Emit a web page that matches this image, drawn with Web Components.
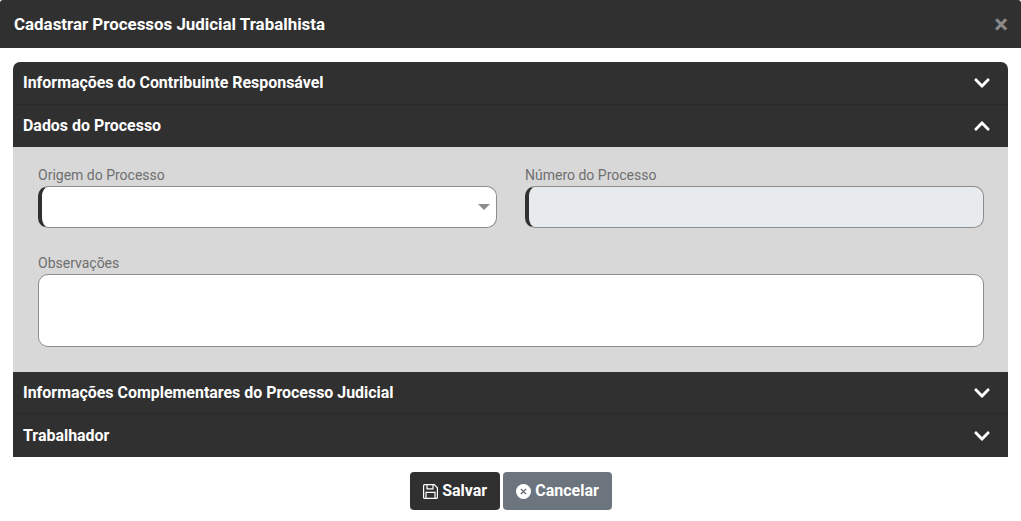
<!DOCTYPE html>
<html lang="pt-BR">
<head>
<meta charset="utf-8">
<title>Cadastrar Processos Judicial Trabalhista</title>
<style>
	html, body { margin: 0; background: #fff; }
	body { font-family: Roboto, "Liberation Sans", sans-serif; width: 1021px; height: 521px; overflow: hidden; }
</style>
</head>
<body>
<process-modal title-text="Cadastrar Processos Judicial Trabalhista">
	<accordion-item label="Informações do Contribuinte Responsável"></accordion-item>
	<accordion-item label="Dados do Processo" open>
		<div style="display:grid;grid-template-columns:459px 459px;column-gap:28px;row-gap:26px">
			<form-field label="Origem do Processo" kind="select" marked></form-field>
			<form-field label="Número do Processo" kind="disabled" marked></form-field>
			<form-field label="Observações" kind="area" style="grid-column:1 / span 2"></form-field>
		</div>
	</accordion-item>
	<accordion-item label="Informações Complementares do Processo Judicial" short></accordion-item>
	<accordion-item label="Trabalhador" last></accordion-item>
	<action-button slot="footer" variant="dark" icon="save">Salvar</action-button>
	<action-button slot="footer" variant="gray" icon="cancel">Cancelar</action-button>
</process-modal>

<script>
class ProcessModal extends HTMLElement {
	constructor() {
		super();
		this.attachShadow({mode: "open"});
		this.shadowRoot.innerHTML = `
		<style>
			:host { display: block; }
			header {
				height: 48px;
				box-sizing: border-box;
				background: #303030;
				color: #fff;
				display: flex;
				align-items: center;
				justify-content: space-between;
				padding: 0 14px;
				font-size: 16.9px;
				font-weight: 700;
				border-radius: 3px 3px 0 0;
			}
			.close { color: #8a8a8a; font-size: 26px; line-height: 1; font-weight: 700; margin-right: -1px; }
			main { padding: 14px 13px 0; }
			.list { border-radius: 7px 7px 0 0; overflow: hidden; }
			footer { display: flex; justify-content: center; gap: 3px; padding: 15px 0 0 1px; }
		</style>
		<header><span>${this.getAttribute("title-text")}</span><span class="close">×</span></header>
		<main>
			<div class="list"><slot></slot></div>
			<footer><slot name="footer"></slot></footer>
		</main>
		`;
	}
}
customElements.define("process-modal", ProcessModal);

class AccordionItem extends HTMLElement {
	constructor() {
		super();
		const open = this.hasAttribute("open");
		this.attachShadow({mode: "open"});
		this.shadowRoot.innerHTML = `
		<style>
			:host { display: block; }
			.head {
				height: 43px;
				box-sizing: border-box;
				background: #303030;
				color: #fff;
				border-bottom: 1px solid #2a2a2a;
				display: flex;
				align-items: center;
				justify-content: space-between;
				padding: 0 18px 0 10px;
				font-size: 15.95px;
				font-weight: 700;
			}
			.head span { margin-top: -2px; }
			:host([short]) .head span, :host([last]) .head span { margin-top: 0; }
			:host([open]) .head, :host([short]) .head { height: 42px; }
			:host([open]) .head { border-bottom: none; }
			:host([last]) .head { border-bottom: none; }
			svg { width: 16px; height: 18px; display: block; fill: #fff; }
			svg.up { transform: rotate(180deg); }
			.body { background: #d8d8d8; padding: 19px 25px 25px; }
		</style>
		<div class="head">
			<span>${this.getAttribute("label")}</span>
			<svg class="${open ? "up" : ""}" viewBox="0 0 448 512"><path d="M207.029 381.476L12.686 187.132c-9.373-9.373-9.373-24.569 0-33.941l22.667-22.667c9.357-9.357 24.522-9.375 33.901-.04L224 284.505l154.745-154.021c9.379-9.335 24.544-9.317 33.901.04l22.667 22.667c9.373 9.373 9.373 24.569 0 33.941L240.971 381.476c-9.373 9.372-24.569 9.372-33.942 0z"/></svg>
		</div>
		${open ? `<div class="body"><slot></slot></div>` : ""}
		`;
	}
}
customElements.define("accordion-item", AccordionItem);

class FormField extends HTMLElement {
	constructor() {
		super();
		const kind = this.getAttribute("kind");
		this.attachShadow({mode: "open"});
		this.shadowRoot.innerHTML = `
		<style>
			:host { display: block; }
			label { display: block; height: 20px; line-height: 18px; font-size: 14px; color: #6f6f6f; }
			.box {
				height: 42px;
				box-sizing: border-box;
				background: #fff;
				border: 1px solid #8c8c8c;
				border-radius: 10px;
				display: flex;
				align-items: center;
				justify-content: flex-end;
				padding-right: 6px;
			}
			:host([marked]) .box { border-left: 4px solid #303030; }
			:host([kind="disabled"]) .box { background: #e8ebee; }
			:host([kind="area"]) .box { height: 73px; }
			.arrow {
				width: 0;
				height: 0;
				border-left: 6px solid transparent;
				border-right: 6px solid transparent;
				border-top: 6px solid #8c8c8c;
			}
		</style>
		<label>${this.getAttribute("label")}</label>
		<div class="box">${kind === "select" ? `<span class="arrow"></span>` : ""}</div>
		`;
	}
}
customElements.define("form-field", FormField);

class ActionButton extends HTMLElement {
	static icons = {
		save: `<svg viewBox="0 0 15 15" width="15" height="15" fill="none" stroke="#fff" stroke-width="1.2"><path d="M1.6.6h9.6l3.2 3.2v9.6a1 1 0 0 1-1 1H1.6a1 1 0 0 1-1-1V1.6a1 1 0 0 1 1-1z"/><path d="M4 .6v4.2h6V.6M3 14.4V8.4h9v6"/></svg>`,
		cancel: `<svg viewBox="0 0 16 16" width="15" height="15"><circle cx="8" cy="8" r="8" fill="#fff"/><path d="M5.2 5.2l5.6 5.6M10.8 5.2l-5.6 5.6" stroke="#5c646c" stroke-width="1.5" fill="none"/></svg>`
	};

	constructor() {
		super();
		this.attachShadow({mode: "open"});
		this.shadowRoot.innerHTML = `
		<style>
			:host { display: block; }
			button {
				height: 38px;
				box-sizing: border-box;
				border: none;
				border-radius: 4px;
				padding: 0 13px;
				display: flex;
				align-items: center;
				gap: 4px;
				font: 700 16px Roboto, "Liberation Sans", sans-serif;
				color: #fff;
			}
			:host([variant="dark"]) button { background: #303030; }
			:host([variant="gray"]) button { background: #6c757d; }
			span { display: block; margin-top: -1px; }
		</style>
		<button type="button">${ActionButton.icons[this.getAttribute("icon")]}<span><slot></slot></span></button>
		`;
	}
}
customElements.define("action-button", ActionButton);
</script>
</body>
</html>
